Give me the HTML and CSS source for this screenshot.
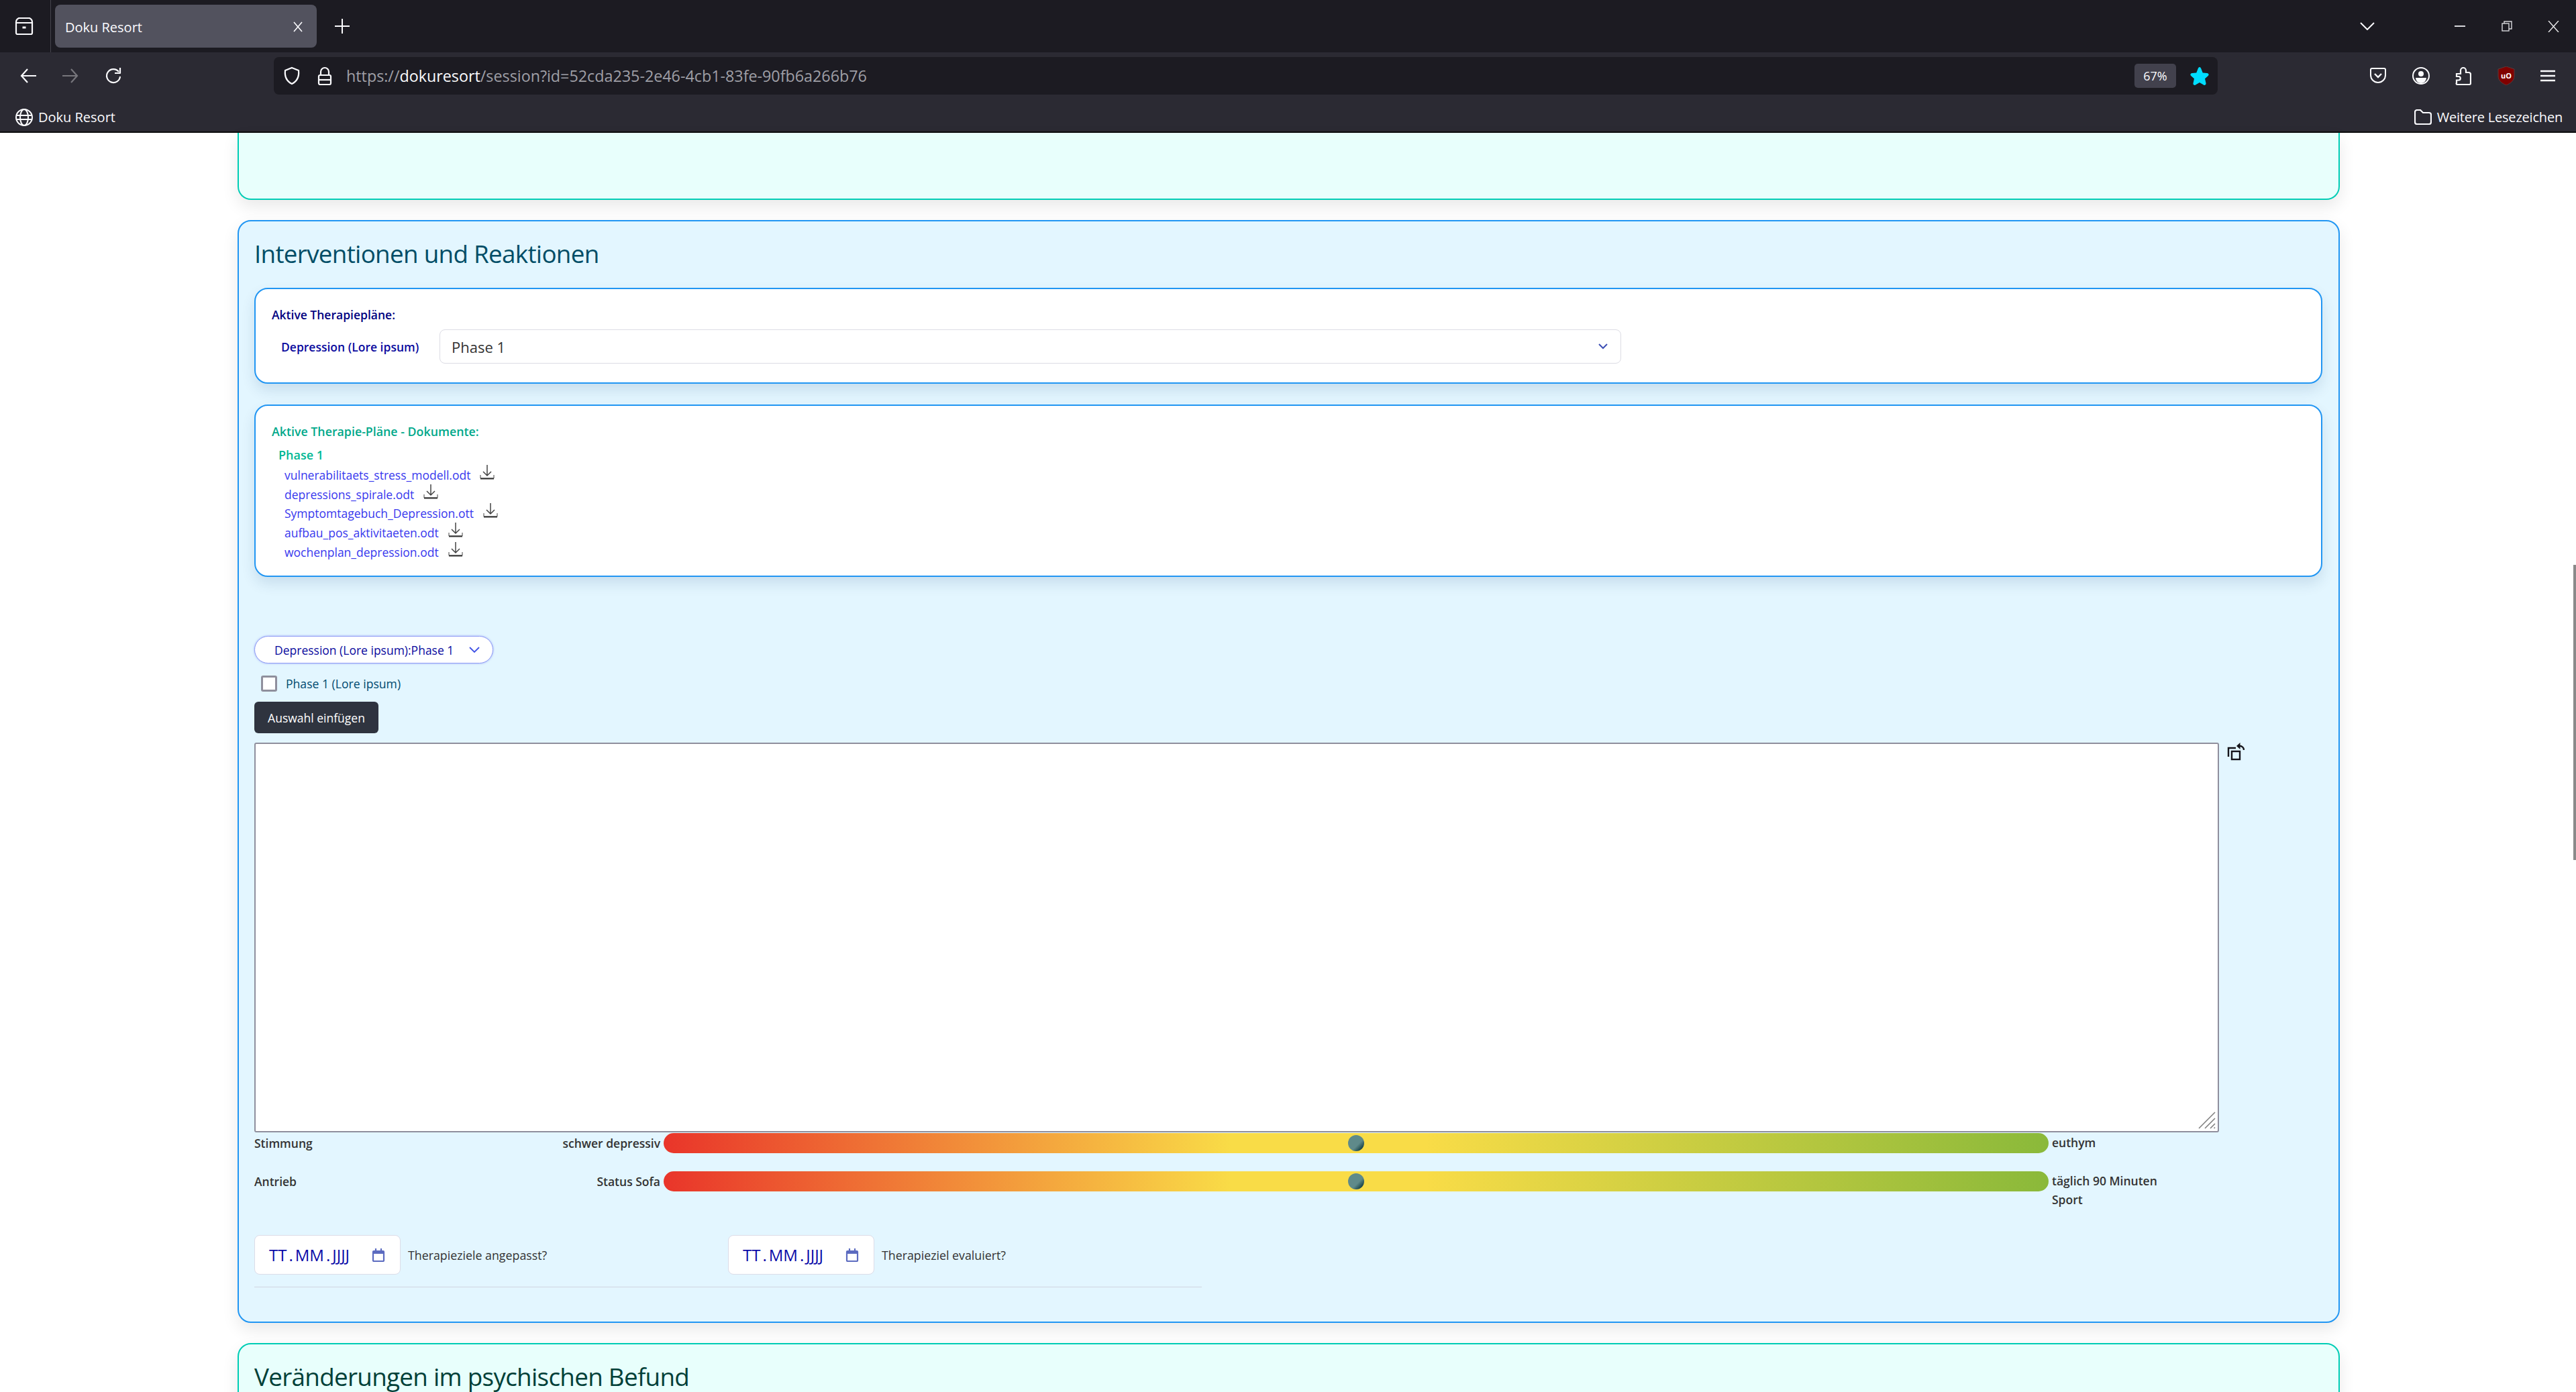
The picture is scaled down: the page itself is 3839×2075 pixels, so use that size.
FILE: index.html
```html
<!DOCTYPE html>
<html lang="de">
<head>
  <meta charset="UTF-8">
  <title>Doku Resort</title>
  <link rel="stylesheet" href="styles.css">
</head>
<body>
  <header class="browser">
    <div class="tabbar">
      <div class="tabs-btn">
        <svg width="28" height="28" viewBox="0 0 28 28" fill="none" stroke="#fbfbfe" stroke-width="2.2"><path d="M2 9h24v15a2 2 0 0 1-2 2H4a2 2 0 0 1-2-2z"/><path d="M2 9a7 7 0 0 1 4-7h16a7 7 0 0 1 4 7"/><path d="M11.500 16h5" stroke-width="3"/></svg>
      </div>
      <div class="tab">
        <span class="tab-title">Doku Resort</span>
        <svg width="16" height="16" viewBox="0 0 16 16" stroke="#fbfbfe" stroke-width="1.6"><path d="M2 1l12 14M14 1L2 15"/></svg>
      </div>
      <svg class="new-tab" width="22" height="22" viewBox="0 0 22 22" stroke="#fbfbfe" stroke-width="2"><path d="M11 0v22M0 11h22"/></svg>
      <div class="win-controls">
        <svg class="tabs-all" width="22" height="12" viewBox="0 0 22 12" fill="none" stroke="#fbfbfe" stroke-width="2"><path d="M1 1l10 10L21 1"/></svg>
        <svg class="win-min" width="16" height="2" viewBox="0 0 16 2" stroke="#d8d8dc" stroke-width="2"><path d="M0 1h16"/></svg>
        <svg class="win-max" width="16" height="16" viewBox="0 0 16 16" fill="none" stroke="#d8d8dc" stroke-width="1.4"><rect x="1" y="4" width="10" height="11"/><path d="M4 4V1h11v11h-4"/></svg>
        <svg class="win-close" width="17" height="17" viewBox="0 0 17 17" stroke="#e8e8ea" stroke-width="1.4"><path d="M1 0l15 17M16 0L1 17"/></svg>
      </div>
    </div>

    <div class="navbar">
      <div class="nav-buttons">
        <svg width="24" height="22" viewBox="0 0 24 22" fill="none" stroke="#fbfbfe" stroke-width="2.2"><path d="M11 1L2 11l9 10M2 11h22"/></svg>
        <svg width="24" height="22" viewBox="0 0 24 22" fill="none" stroke="#77767c" stroke-width="2.2"><path d="M13 1l9 10-9 10M22 11H0"/></svg>
        <svg width="26" height="26" viewBox="0 0 26 26" fill="none" stroke="#fbfbfe" stroke-width="2.2"><path d="M21 7a10 10 0 1 0 2 7"/><path d="M23 1v8h-8" stroke-linejoin="round"/></svg>
      </div>
      <div class="urlbar">
        <svg width="26" height="28" viewBox="0 0 26 28" fill="none" stroke="#fbfbfe" stroke-width="2.2"><path d="M13 2l10 4c1 9-2 16-10 20C5 22 2 15 3 6z"/></svg>
        <svg class="lock" width="22" height="28" viewBox="0 0 22 28" fill="none" stroke="#fbfbfe" stroke-width="2.2"><rect x="2" y="13" width="18" height="14" rx="2"/><path d="M5 13V8a6 6 0 0 1 12 0v5"/><path d="M2 20h18"/></svg>
        <span class="url">https://<b>dokuresort</b>/session?id=52cda235-2e46-4cb1-83fe-90fb6a266b76</span>
        <span class="zoom-pill">67%</span>
        <svg class="star" width="28" height="27" viewBox="0 0 28 27" fill="#00ddff"><path d="M14 0c1.2 0 1.8 1 2.4 2.5l2.3 6 6.3.5c2.400.2 3.500 2.300 1.800 3.900l-4.800 4.400 1.500 6.600c.5 2.400-1.500 3.800-3.500 2.500L14 23l-6 3.400c-2 1.300-4-.1-3.500-2.500L6 17.300 1.200 12.900C-.5 11.300.6 9.200 3 9l6.300-.5 2.300-6C12.200 1 12.800 0 14 0z"/></svg>
      </div>
      <div class="nav-tools">
        <svg width="24" height="24" viewBox="0 0 24 24" fill="none" stroke="#fbfbfe" stroke-width="2"><path d="M3 1h18a2 2 0 0 1 2 2v8a11 11 0 0 1-22 0V3a2 2 0 0 1 2-2z"/><path d="M7 9l5 5 5-5" stroke-width="2.400"/></svg>
        <svg width="26" height="26" viewBox="0 0 26 26" fill="none" stroke="#fbfbfe" stroke-width="2"><circle cx="13" cy="13" r="12"/><circle cx="13" cy="10" r="4" fill="#fbfbfe" stroke="none"/><path d="M5 16h16a8 8 0 0 1-16 0z" fill="#fbfbfe" stroke="none"/></svg>
        <svg width="24" height="28" viewBox="0 0 24 28" fill="none" stroke="#fbfbfe" stroke-width="2.200"><path d="M2 11h6V6a4 4 0 0 1 8 0v3h4a3 3 0 0 1 3 3v13a2 2 0 0 1-2 2H3a1.500 1.500 0 0 1-1-2.500v-4h3a2.500 2.500 0 0 0 0-5.500H2z"/></svg>
        <svg width="26" height="28" viewBox="0 0 26 28"><path d="M13 0l12 4v10c0 7-5 11-12 14C6 25 1 21 1 14V4z" fill="#800000" stroke="#5a3a3a"/><text class="ubo" x="13" y="18" text-anchor="middle">uO</text></svg>
        <svg width="22" height="18" viewBox="0 0 22 18" stroke="#fbfbfe" stroke-width="2.400"><path d="M0 2h22M0 9h22M0 16h22"/></svg>
      </div>
    </div>

    <div class="bookmarks">
      <div class="bookmark">
        <svg width="26" height="26" viewBox="0 0 26 26" fill="none" stroke="#fbfbfe" stroke-width="2"><circle cx="13" cy="13" r="12"/><ellipse cx="13" cy="13" rx="6" ry="12"/><path d="M1 10h24M1 16h24" stroke-width="1.800"/></svg>
        <span>Doku Resort</span>
      </div>
      <div class="bookmark bookmark-more">
        <svg width="26" height="23" viewBox="0 0 26 23" fill="none" stroke="#fbfbfe" stroke-width="2.200"><path d="M1 4a3 3 0 0 1 3-3h5l4 4h9a3 3 0 0 1 3 3v11a3 3 0 0 1-3 3H4a3 3 0 0 1-3-3z"/></svg>
        <span>Weitere Lesezeichen</span>
      </div>
    </div>
  </header>

  <main class="page">
    <section class="card card-teal card-cut"></section>

    <section class="card card-blue">
      <h2 class="card-title">Interventionen und Reaktionen</h2>

      <div class="plan-box">
        <div class="plan-heading">Aktive Therapiepläne:</div>
        <div class="plan-row">
          <label class="plan-label">Depression (Lore ipsum)</label>
          <div class="select-box">
            <span>Phase 1</span>
            <svg width="14" height="9" viewBox="0 0 14 9" fill="none" stroke="#3f51b5" stroke-width="2"><path d="M1 1l6 6 6-6"/></svg>
          </div>
        </div>
      </div>

      <div class="plan-box docs-box">
        <div class="docs-heading">Aktive Therapie-Pläne - Dokumente:</div>
        <div class="docs-phase">Phase 1</div>
        <ul class="docs-list">
          <li><a href="#">vulnerabilitaets_stress_modell.odt</a><svg class="dl" viewBox="0 0 22 22" width="22" height="22"><use href="#dl-icon"/></svg></li>
          <li><a href="#">depressions_spirale.odt</a><svg class="dl" viewBox="0 0 22 22" width="22" height="22"><use href="#dl-icon"/></svg></li>
          <li><a href="#">Symptomtagebuch_Depression.ott</a><svg class="dl" viewBox="0 0 22 22" width="22" height="22"><use href="#dl-icon"/></svg></li>
          <li><a href="#">aufbau_pos_aktivitaeten.odt</a><svg class="dl" viewBox="0 0 22 22" width="22" height="22"><use href="#dl-icon"/></svg></li>
          <li><a href="#">wochenplan_depression.odt</a><svg class="dl" viewBox="0 0 22 22" width="22" height="22"><use href="#dl-icon"/></svg></li>
        </ul>
      </div>

      <div class="pill-select">
        <span>Depression (Lore ipsum):Phase 1</span>
        <svg width="16" height="10" viewBox="0 0 16 10" fill="none" stroke="#3f51e5" stroke-width="1.800"><path d="M1 1l7 7 7-7"/></svg>
      </div>
      <label class="check-row">
        <span class="check"></span>
        <span>Phase 1 (Lore ipsum)</span>
      </label>
      <button class="insert-btn" type="button">Auswahl einfügen</button>

      <div class="notes-row">
        <div class="notes">
          <svg class="grip" width="26" height="26" viewBox="0 0 26 26" stroke="#808080" stroke-width="1.600"><path d="M1 25L25 1M10 25L25 10M18 25l7-7M23.500 25l1.500-1.500"/></svg>
        </div>
        <svg class="undo" width="26" height="27" viewBox="0 0 26 27" fill="none" stroke="#15141a" stroke-width="2.400"><rect x="7" y="13" width="12" height="12"/><path d="M2 21V8h11"/><path d="M25 11a6 6 0 0 0-6-6"/><path d="M14 5l5.500-5v10z" fill="#15141a" stroke="none"/></svg>
      </div>

      <div class="scale-row scale-first">
        <span class="scale-name">Stimmung</span>
        <span class="scale-low">schwer depressiv</span>
        <div class="scale-track"><span class="scale-thumb"></span></div>
        <span class="scale-high">euthym</span>
      </div>
      <div class="scale-row">
        <span class="scale-name">Antrieb</span>
        <span class="scale-low">Status Sofa</span>
        <div class="scale-track"><span class="scale-thumb"></span></div>
        <span class="scale-high">täglich 90 Minuten Sport</span>
      </div>

      <div class="dates">
        <div class="date-field">
          <div class="date-input">
            <span class="date-text">TT<i>.</i>MM<i>.</i>JJJJ</span>
            <svg width="20" height="20" viewBox="0 0 20 20" fill="none" stroke="#5c6bc0" stroke-width="2.200"><rect x="2" y="4" width="16" height="15" rx="1"/><path d="M2 6h16" stroke-width="4"/><path d="M6 0v4M14 0v4"/></svg>
          </div>
          <span class="date-label">Therapieziele angepasst?</span>
        </div>
        <div class="date-field">
          <div class="date-input">
            <span class="date-text">TT<i>.</i>MM<i>.</i>JJJJ</span>
            <svg width="20" height="20" viewBox="0 0 20 20" fill="none" stroke="#5c6bc0" stroke-width="2.200"><rect x="2" y="4" width="16" height="15" rx="1"/><path d="M2 6h16" stroke-width="4"/><path d="M6 0v4M14 0v4"/></svg>
          </div>
          <span class="date-label">Therapieziel evaluiert?</span>
        </div>
      </div>
      <hr class="dates-rule">
    </section>

    <section class="card card-teal">
      <h2 class="card-title card-title-teal">Veränderungen im psychischen Befund</h2>
    </section>
  </main>

  <div class="scrollbar"></div>

  <svg width="0" height="0" class="defs">
    <symbol id="dl-icon" viewBox="0 0 22 22">
      <path d="M11 0v16M5 10l6 6 6-6" fill="none" stroke="#444" stroke-width="1.500"/>
      <path d="M1 15v5h20v-5" fill="none" stroke="#444" stroke-width="1"/>
      <path d="M1 20.500h20" stroke="#333" stroke-width="2"/>
    </symbol>
  </svg>
</body>
</html>
```
FILE: styles.css
```css
* {
  box-sizing: border-box;
}

html,
body {
  margin: 0;
  height: 2075px;
  overflow: hidden;
}

body {
  background: #fff;
  font-family: "Open Sans", "Noto Sans", sans-serif;
  color: #333;
}

.defs {
  position: absolute;
}

/* browser chrome */
.browser {
  height: 198px;
  background: #2b2a33;
  border-bottom: 2px solid #0c0c0d;
  color: #fbfbfe;
  font-size: 20px;
}

.tabbar {
  height: 78px;
  background: #1c1b22;
  display: flex;
  align-items: center;
}

.tabs-btn {
  width: 76px;
  height: 78px;
  padding: 25px 0 0 22px;
  border-right: 1px solid #45444c;
}

.tab {
  width: 390px;
  height: 64px;
  margin-left: 6px;
  padding: 2px 20px 0 15px;
  background: #52525e;
  border-radius: 8px;
  display: flex;
  align-items: center;
  justify-content: space-between;
}

.new-tab {
  margin-left: 27px;
}

.win-controls {
  margin-left: auto;
  display: flex;
  align-items: center;
}

.tabs-all {
  margin-right: 119px;
}

.win-min {
  margin-right: 54px;
}

.win-max {
  margin-right: 53px;
}

.win-close {
  margin-right: 25px;
}

.navbar {
  height: 70px;
  padding-top: 7px;
  display: flex;
}

.nav-buttons {
  width: 408px;
  height: 56px;
  padding-left: 30px;
  display: flex;
  align-items: center;
  gap: 39px;
}

.urlbar {
  width: 2897px;
  height: 56px;
  background: #1c1b22;
  border-radius: 8px;
  padding: 0 13px 0 14px;
  display: flex;
  align-items: center;
}

.lock {
  margin-left: 25px;
}

.url {
  margin-left: 21px;
  font-size: 23.3px;
  color: #9f9fa6;
  flex: 1;
}

.url b {
  font-weight: 400;
  color: #fbfbfe;
}

.zoom-pill {
  width: 62px;
  height: 36px;
  background: #42414d;
  border-radius: 5px;
  font-size: 18px;
  display: flex;
  align-items: center;
  justify-content: center;
}

.star {
  margin-left: 21px;
}

.nav-tools {
  flex: 1;
  height: 56px;
  padding: 0 31px 0 227px;
  display: flex;
  align-items: center;
  justify-content: space-between;
}

.ubo {
  font-size: 11px;
  font-weight: 700;
  fill: #fff;
}

.bookmarks {
  height: 48px;
  padding: 5px 20px 0 23px;
  display: flex;
  align-items: center;
  justify-content: space-between;
}

.bookmark {
  display: flex;
  align-items: center;
  gap: 8px;
}

.bookmark-more {
  letter-spacing: -0.2px;
}

/* page */
.page {
  padding: 0 352px 0 354px;
}

.card {
  border: 2px solid;
  border-radius: 20px;
  box-shadow: 0 10px 24px rgba(0, 0, 0, 0.09);
  padding: 23px 24px 24px 23px;
  margin-bottom: 30px;
}

.card-teal {
  background: #e8fffc;
  border-color: #00cdb5;
}

.card-cut {
  height: 100px;
  border-top: 0;
  border-radius: 0 0 20px 20px;
}

.card-blue {
  background: #e3f6ff;
  border-color: #2196f3;
  height: 1644px;
}

.card-title {
  margin: 0;
  font-size: 36.8px;
  line-height: 50px;
  font-weight: 400;
  letter-spacing: -0.7px;
  color: #004d66;
}

.card-title-teal {
  color: #004038;
}

.plan-box {
  margin-top: 26px;
  height: 143px;
  background: #fff;
  border: 2px solid #2196f3;
  border-radius: 20px;
  box-shadow: 0 10px 20px rgba(0, 60, 110, 0.12);
  padding: 24px;
}

.plan-heading {
  font-size: 17.5px;
  font-weight: 600;
  line-height: 28px;
  color: #000080;
}

.plan-row {
  margin-top: 8px;
  display: flex;
  align-items: center;
}

.plan-label {
  width: 250px;
  padding-left: 14px;
  font-size: 17.5px;
  font-weight: 600;
  color: #0a0a9e;
}

.select-box {
  width: 1761px;
  height: 51px;
  border: 1px solid #dcdce4;
  border-radius: 8px;
  padding: 0 19px 0 17px;
  font-size: 22px;
  color: #333;
  display: flex;
  align-items: center;
  justify-content: space-between;
}

.docs-box {
  margin-top: 31px;
  height: 257px;
}

.docs-heading {
  font-size: 17.8px;
  font-weight: 600;
  line-height: 28px;
  color: #00a88a;
}

.docs-phase {
  margin-top: 10px;
  padding-left: 10px;
  font-size: 18px;
  font-weight: 600;
  line-height: 22px;
  color: #00b894;
}

.docs-list {
  margin: 5px 0 0;
  padding: 0 0 0 19px;
  list-style: none;
}

.docs-list li {
  height: 28.6px;
  display: flex;
  align-items: center;
}

.docs-list a {
  font-size: 17.5px;
  color: #3838ee;
  text-decoration: none;
}

.dl {
  margin: -8px 0 0 14px;
}

.pill-select {
  margin-top: 88px;
  width: 356px;
  height: 41px;
  background: #fff;
  border: 1px solid #8f9cf5;
  border-radius: 21px;
  padding: 0 19px 0 29px;
  box-shadow: 0 0 3px rgba(80, 90, 240, 0.5);
  font-size: 17.5px;
  color: #0a0a9e;
  display: flex;
  align-items: center;
  justify-content: space-between;
}

.check-row {
  margin: 18px 0 0 10px;
  height: 23px;
  font-size: 17.6px;
  color: #004a6e;
  display: flex;
  align-items: center;
  gap: 13px;
}

.check {
  width: 24px;
  height: 24px;
  background: #fff;
  border: 3px solid #8f8f9d;
  border-radius: 3px;
}

.insert-btn {
  display: block;
  margin-top: 16px;
  width: 185px;
  height: 47px;
  background: #2f343f;
  border: 0;
  border-radius: 6px;
  color: #fff;
  font-family: inherit;
  font-size: 17.5px;
}

.notes-row {
  margin-top: 14px;
  display: flex;
  align-items: flex-start;
  gap: 12px;
}

.notes {
  position: relative;
  width: 2928px;
  height: 581px;
  background: #fff;
  border: 2px solid #8f8f9d;
  border-radius: 3px;
}

.grip {
  position: absolute;
  right: 3px;
  bottom: 3px;
}

.scale-row {
  display: flex;
  align-items: flex-start;
  height: 30px;
  font-size: 17.5px;
  font-weight: 600;
  line-height: 30px;
  margin-top: 27px;
}

.scale-first {
  margin-top: 1px;
}

.scale-name {
  width: 300px;
}

.scale-low {
  width: 305px;
  text-align: right;
}

.scale-track {
  position: relative;
  width: 2064px;
  height: 30px;
  margin-left: 5px;
  border-radius: 15px;
  background: linear-gradient(to right, #e9352a 0%, #f9dc47 41%, #f9dc47 55%, #8ab93a 100%);
}

.scale-thumb {
  position: absolute;
  left: 1020px;
  top: 3px;
  width: 24px;
  height: 24px;
  border-radius: 50%;
  background: linear-gradient(135deg, #5f8a8a 60%, #0f3a40 88%);
}

.scale-high {
  width: 178px;
  margin-left: 5px;
  line-height: 28px;
}

.dates {
  margin-top: 65px;
  display: flex;
}

.date-field {
  width: 706px;
  display: flex;
  align-items: center;
  gap: 11px;
}

.date-input {
  width: 218px;
  height: 59px;
  background: #fff;
  border: 1px solid #dcdce8;
  border-radius: 8px;
  padding: 0 22px 0 21px;
  color: #0a0aa8;
  display: flex;
  align-items: center;
  justify-content: space-between;
}

.date-text {
  font-size: 24px;
}

.date-text i {
  font-style: normal;
  margin: 0 3px;
}

.date-label {
  font-size: 17.8px;
  color: #333;
}

.dates-rule {
  margin: 18px 0 0;
  width: 1412px;
  height: 0;
  border: 0;
  border-top: 1px solid #d0d5e0;
}

/* window scrollbar */
.scrollbar {
  position: absolute;
  top: 842px;
  right: 0;
  width: 4px;
  height: 440px;
  background: #8a8a8a;
}
```
